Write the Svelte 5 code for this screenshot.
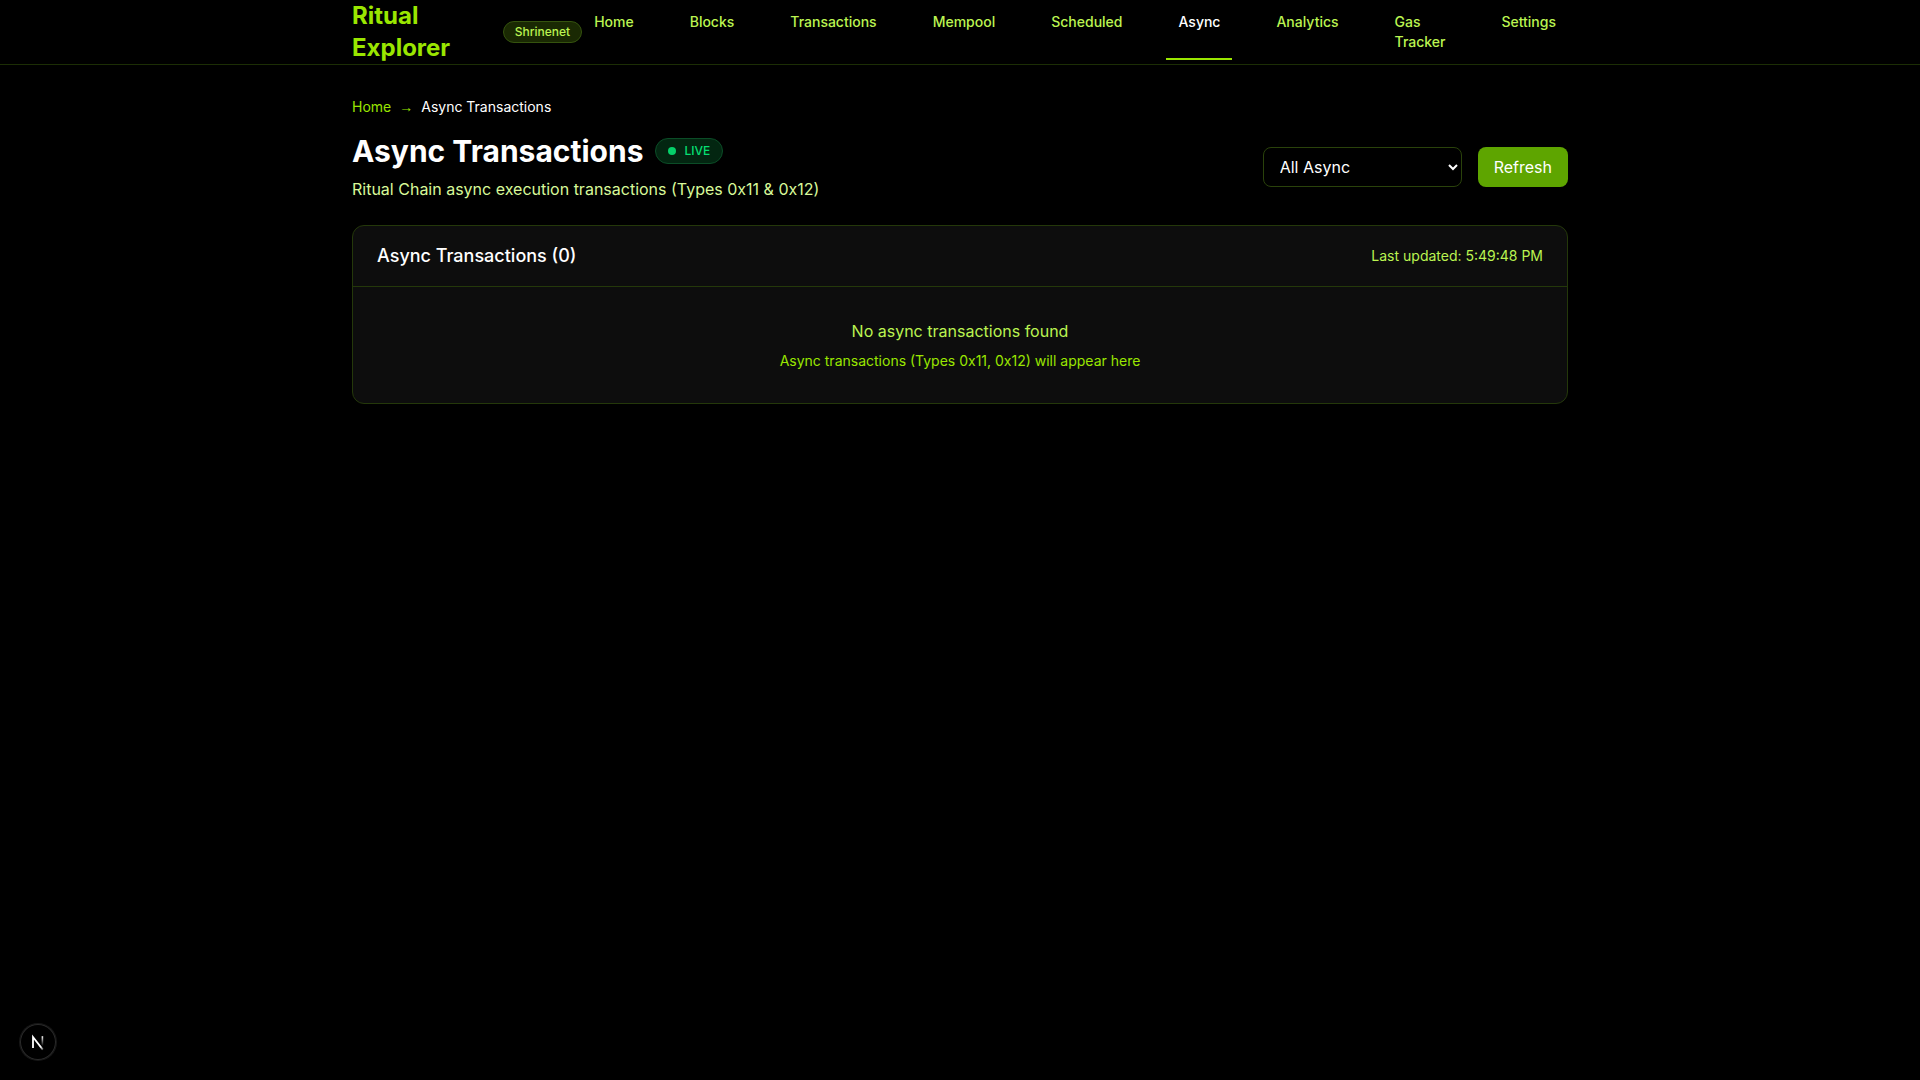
<script>
  const links = [
    'Home', 'Blocks', 'Transactions', 'Mempool', 'Scheduled',
    'Async', 'Analytics', 'Gas Tracker', 'Settings'
  ];
  const active = 'Async';
  let filter = $state('all');
</script>

<svelte:head>
  <title>Async Transactions</title>
</svelte:head>

<header class="topbar">
  <div class="container bar">
    <div class="brand">
      <a class="logo" href="#home">Ritual Explorer</a>
      <span class="network">Shrinenet</span>
    </div>
    <nav>
      {#each links as link}
        <a
          href="#{link.toLowerCase().replace(' ', '-')}"
          class:active={link === active}
          aria-current={link === active ? 'page' : undefined}>{link}</a>
      {/each}
    </nav>
  </div>
</header>

<main class="container">
  <nav class="crumbs" aria-label="Breadcrumb">
    <a href="#home">Home</a>
    <span class="arrow">→</span>
    <span class="current">Async Transactions</span>
  </nav>

  <div class="heading">
    <div>
      <div class="title">
        <h1>Async Transactions</h1>
        <span class="live"><span class="dot"></span>LIVE</span>
      </div>
      <p class="subtitle">Ritual Chain async execution transactions (Types 0x11 &amp; 0x12)</p>
    </div>
    <div class="controls">
      <select bind:value={filter} aria-label="Transaction type">
        <option value="all">All Async</option>
        <option value="0x11">Type 0x11</option>
        <option value="0x12">Type 0x12</option>
      </select>
      <button class="refresh" type="button">Refresh</button>
    </div>
  </div>

  <section class="card">
    <div class="card-head">
      <h2>Async Transactions (0)</h2>
      <span class="updated">Last updated: 5:49:48 PM</span>
    </div>
    <div class="empty">
      <p>No async transactions found</p>
      <p class="hint">Async transactions (Types 0x11, 0x12) will appear here</p>
    </div>
  </section>
</main>

<button class="devtools" type="button" aria-label="Open developer tools">
  <svg width="36" height="36" viewBox="0 0 36 36" fill="none">
    <defs>
      <linearGradient id="diag" x1="17" y1="18" x2="23" y2="26" gradientUnits="userSpaceOnUse">
        <stop stop-color="#fff" />
        <stop offset="0.6" stop-color="#fff" />
        <stop offset="1" stop-color="#fff" stop-opacity="0.3" />
      </linearGradient>
      <linearGradient id="stem" x1="22" y1="12" x2="22" y2="22" gradientUnits="userSpaceOnUse">
        <stop stop-color="#fff" />
        <stop offset="1" stop-color="#fff" stop-opacity="0" />
      </linearGradient>
    </defs>
    <path d="M13 24V13L22.8 25.6" stroke="url(#diag)" stroke-width="1.8" />
    <path d="M22.4 12.2V22" stroke="url(#stem)" stroke-width="1.6" />
  </svg>
</button>

<style>
  :global(body) {
    background: #000;
    color: #fff;
    font-family: Inter, 'Liberation Sans', sans-serif;
    font-size: 16px;
    line-height: 24px;
  }

  :global(*) {
    box-sizing: border-box;
  }

  h1, h2, p {
    margin: 0;
  }

  a {
    color: inherit;
    text-decoration: none;
  }

  .container {
    max-width: 1280px;
    margin: 0 auto;
    padding: 0 32px;
  }

  .topbar {
    border-bottom: 1px solid #1c2e05;
  }

  .bar {
    display: flex;
    justify-content: space-between;
    align-items: center;
    height: 64px;
  }

  .brand {
    display: flex;
    align-items: center;
  }

  .logo {
    color: #9ae600;
    font-size: 24px;
    line-height: 32px;
    font-weight: 700;
  }

  .network {
    margin-left: 12px;
    padding: 2px 11px;
    border: 1px solid #35530e;
    border-radius: 999px;
    background: #1a2903;
    color: #bbf451;
    font-size: 12px;
    line-height: 16px;
    font-weight: 500;
  }

  .bar nav {
    display: flex;
    gap: 32px;
  }

  .bar nav a {
    padding: 8px 12px;
    color: #bbf451;
    font-size: 14px;
    line-height: 20px;
    font-weight: 500;
  }

  .bar nav a.active {
    color: #fff;
    box-shadow: inset 0 -2px #9ae600;
  }

  main.container {
    padding-top: 32px;
    padding-bottom: 32px;
  }

  .crumbs {
    display: flex;
    gap: 8px;
    margin-bottom: 16px;
    color: #9ae600;
    font-size: 14px;
    line-height: 20px;
  }

  .crumbs .arrow {
    font-family: 'Liberation Sans', sans-serif;
  }

  .crumbs .current {
    color: #fff;
  }

  .heading {
    display: flex;
    justify-content: space-between;
    align-items: center;
    margin-bottom: 24px;
  }

  .title {
    display: flex;
    align-items: center;
    gap: 12px;
    margin-bottom: 8px;
  }

  h1 {
    font-size: 30px;
    line-height: 36px;
    font-weight: 700;
  }

  .live {
    display: flex;
    align-items: center;
    gap: 8px;
    padding: 4px 12px;
    border: 1px solid #0b4d27;
    border-radius: 999px;
    background: #032611;
    color: #05df72;
    font-size: 12px;
    line-height: 16px;
    font-weight: 500;
  }

  .dot {
    width: 8px;
    height: 8px;
    border-radius: 50%;
    background: #05d06a;
  }

  .subtitle {
    color: #d8f999;
  }

  .controls {
    display: flex;
    gap: 16px;
  }

  select {
    width: 199px;
    height: 40px;
    padding: 8px 12px;
    border: 1px solid #2a420b;
    border-radius: 8px;
    background: #000;
    color: #fff;
    font: inherit;
  }

  .refresh {
    padding: 8px 16px;
    border: 0;
    border-radius: 8px;
    background: #5ea500;
    color: #fff;
    font: inherit;
  }

  .card {
    border: 1px solid #24380a;
    border-radius: 12px;
    background: #0d0d0d;
  }

  .card-head {
    display: flex;
    justify-content: space-between;
    align-items: center;
    padding: 16px 24px;
    border-bottom: 1px solid #24380a;
  }

  h2 {
    font-size: 18px;
    line-height: 28px;
    font-weight: 500;
  }

  .updated {
    color: #bbf451;
    font-size: 14px;
    line-height: 20px;
  }

  .empty {
    padding: 32px;
    color: #bbf451;
    text-align: center;
  }

  .hint {
    margin-top: 8px;
    color: #9ae600;
    font-size: 14px;
    line-height: 20px;
  }

  .devtools {
    position: fixed;
    left: 20px;
    bottom: 20px;
    width: 36px;
    height: 36px;
    padding: 0;
    display: grid;
    place-items: center;
    border: 0;
    border-radius: 50%;
    background: #000;
    box-shadow: 0 0 0 1px #171717, inset 0 0 0 1px #2a2a2a;
  }
</style>
